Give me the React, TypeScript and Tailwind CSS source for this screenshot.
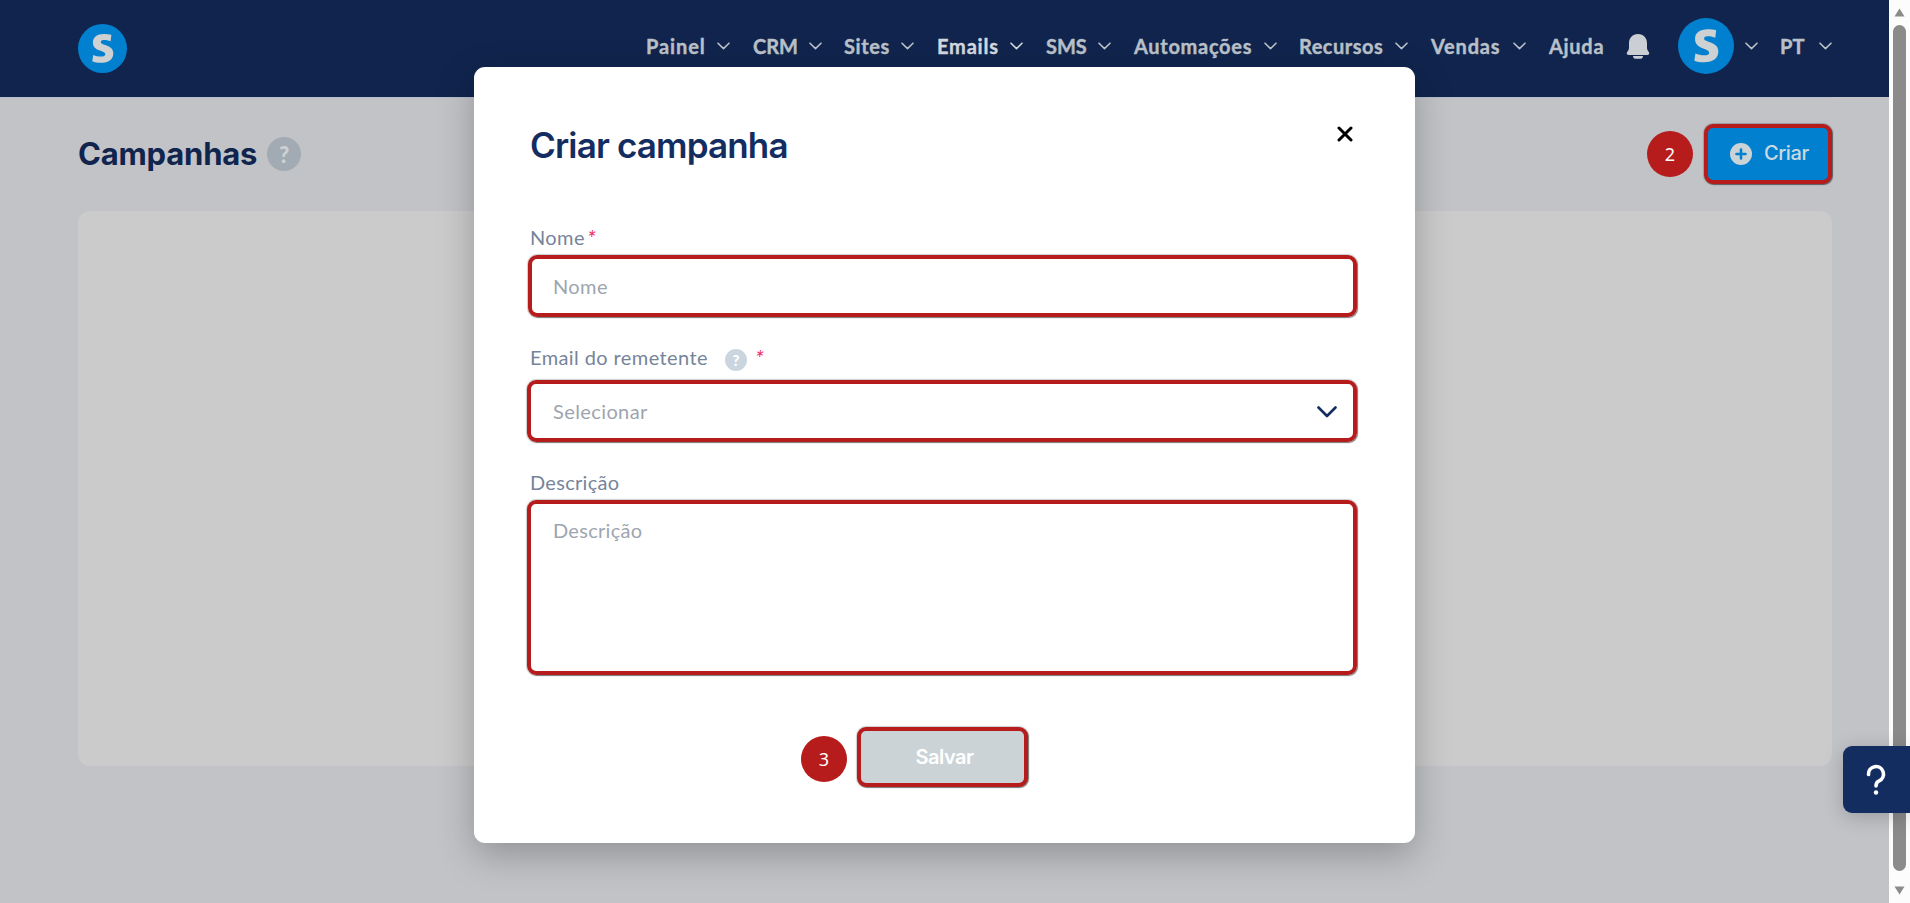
import React from "react";

const navItems = [
    { label: "Painel", text: "w-[71px] tracking-[0.9px]", box: "w-[107px]" },
    { label: "CRM", text: "w-[56px]", box: "w-[91px]" },
    { label: "Sites", text: "w-[57px] tracking-[0.6px]", box: "w-[93px]" },
    { label: "Emails", text: "w-[73px] tracking-[0.8px]", box: "w-[109px]", active: true },
    { label: "SMS", text: "w-[52px]", box: "w-[88px]" },
    { label: "Automações", text: "w-[130px] tracking-[0.7px]", box: "w-[165px]" },
    { label: "Recursos", text: "w-[96px] tracking-[0.5px]", box: "w-[132px]" },
    { label: "Vendas", text: "w-[82px] tracking-[0.8px]", box: "w-[118px]" },
];

const Chevron = () => (
    <svg width="13" height="8" viewBox="0 0 13 8" fill="none" className="mb-[1px] shrink-0">
        <path
            d="M1 1.2 6.5 6.6 12 1.2"
            stroke="currentColor"
            strokeWidth="1.6"
            strokeLinecap="round"
            strokeLinejoin="round"
        />
    </svg>
);

const Logo = ({ className }: { className: string }) => (
    <svg viewBox="0 0 49 49" className={className}>
        <circle cx="24.5" cy="24.5" r="24.5" fill="#0080cf" />
        <path
            d="M33.4 10.8C31 10.1 28.5 9.9 26 9.9C19 9.9 14.9 13 14.9 18.4C14.9 23 17.8 25 22 26.6C25.6 27.9 27.3 28.600 27.3 30.3C27.3 32 25.7 32.600 23 32.600C20.3 32.600 17.7 32 15.2 31L14.3 37.3C16.8 38.3 19.5 38.8 22.600 38.8C30.8 38.8 35.3 35.4 35.3 29.2C35.3 25 32.5 22.8 28 21.2C24.3 19.8 22.8 19.3 22.8 17.9C22.8 16.5 24.2 16 26.600 16C28.8 16 30.8 16.600 32.600 17.3Z"
            fill="#cdd1d2"
        />
    </svg>
);

const Badge = ({ children }: { children: React.ReactNode }) => (
    <div className="flex h-[46px] w-[46px] shrink-0 items-center justify-center rounded-full bg-[#b71c1c] pt-[1px] font-['Noto_Sans',sans-serif] text-[18px] text-white">
        {children}
    </div>
);

const Header = () => (
    <header className="flex h-[97px] w-[1889px] bg-[#10244d] pl-[78px] font-['Lato',sans-serif] text-[20px] font-bold text-[#b9c0c8]">
        <Logo className="mt-[24px] h-[49px] w-[49px]" />
        <nav className="ml-[519px] flex h-[92px] items-center whitespace-nowrap">
            {navItems.map((item) => (
                <div
                    key={item.label}
                    className={`${item.box} ${item.active ? "text-[#d3d8de]" : ""} flex shrink-0 items-center`}
                >
                    <span className={`${item.text} mb-[1px] shrink-0 [-webkit-text-stroke:0.4px]`}>{item.label}</span>
                    <Chevron />
                </div>
            ))}
            <span className="mb-[1px] w-[77px] shrink-0 tracking-[0.7px] [-webkit-text-stroke:0.4px]">Ajuda</span>
            <svg width="24" height="25" viewBox="0 0 24 25" fill="#cbcfd3" className="shrink-0">
                <path d="M12 0C6.500 0 3 4 3 9v4.500c0 2-.8 3.300-1.800 4.600C.3 19.300.6 21 2.500 21h19c1.900 0 2.200-1.700 1.300-2.900-1-1.300-1.800-2.600-1.800-4.600V9c0-5-3.500-9-9-9z" />
                <path d="M7 22h10c0 2-1.500 2.800-3 2.800h-4c-1.500 0-3-.8-3-2.800z" />
            </svg>
            <Logo className="mr-[11px] ml-[28px] h-[56px] w-[56px] shrink-0" />
            <Chevron />
            <span className="mb-[1px] ml-[22px] w-[39px] shrink-0 [-webkit-text-stroke:0.4px]">PT</span>
            <Chevron />
        </nav>
    </header>
);

const redBox = "rounded-[9px] border-4 border-[#b71c1c] shadow-[0_0_1px_1px_rgba(0,0,0,0.2),1px_1px_1px_rgba(0,0,0,0.4)]";

const Modal = () => (
    <div className="absolute top-[67px] left-[474px] h-[776px] w-[941px] rounded-[11px] bg-white pl-[53px] font-['Lato',sans-serif] shadow-[0_12px_36px_rgba(0,0,0,0.25)]">
        <div className="flex h-[146px] justify-between pt-[54px] pr-[62px] pl-[3px]">
            <h2 className="font-['Inter',sans-serif] text-[35px] leading-[48px] font-semibold tracking-[-0.85px] text-[#142d61]">
                Criar campanha
            </h2>
            <svg width="16" height="16" viewBox="0 0 16 16" className="mt-[5px]">
                <path d="M2 2 14 14M14 2 2 14" stroke="#000" strokeWidth="3" strokeLinecap="round" />
            </svg>
        </div>
        <div className="flex h-[42px] items-center pt-[6px] pl-[3px] text-[20px] tracking-[0.4px] text-[#76849a]">
            Nome<span className="ml-[2px] text-[22px] text-[#f0245c] italic">*</span>
        </div>
        <div className={`${redBox} ml-[1px] flex h-[62px] w-[829px] items-center pl-[21px] text-[20px] tracking-[0.4px] text-[#9da5af]`}>
            Nome
        </div>
        <div className="flex h-[63px] items-center pt-[20px] pl-[3px] text-[20px] tracking-[0.4px] text-[#76849a]">
            <span className="mb-[3px]">Email do remetente</span>
            <span className="mt-[3px] ml-[17px] flex h-[22px] w-[22px] items-center justify-center rounded-full bg-[#cbd5df] text-[15px] font-black tracking-normal text-white">
                ?
            </span>
            <span className="mb-[2px] ml-[8px] text-[22px] text-[#f0245c] italic">*</span>
        </div>
        <div className={`${redBox} flex h-[62px] w-[830px] items-center justify-between pr-[16px] pl-[22px] text-[20px] tracking-[0.4px] text-[#9da5af]`}>
            Selecionar
            <svg width="20" height="12" viewBox="0 0 20 12" fill="none" className="mt-[2px]">
                <path
                    d="M1.500 1.500 10 10 18.500 1.500"
                    stroke="#142d61"
                    strokeWidth="2.600"
                    strokeLinecap="round"
                    strokeLinejoin="round"
                />
            </svg>
        </div>
        <div className="flex h-[58px] items-center pt-[22px] pl-[3px] text-[20px] tracking-[0.3px] text-[#76849a]">
            Descrição
        </div>
        <div className={`${redBox} h-[175px] w-[830px] pt-[11px] pl-[22px] text-[20px] tracking-[0.3px] text-[#9da5af]`}>
            Descrição
        </div>
        <div className="mt-[52px] ml-[274px] flex gap-[10px]">
            <div className="mt-[9px]">
                <Badge>3</Badge>
            </div>
            <button
                className={`${redBox} flex h-[60px] w-[171px] items-center justify-center bg-[#cbd3d7] pl-[4px] font-['Inter',sans-serif] text-[20px] font-semibold tracking-[-0.5px] text-white`}
            >
                Salvar
            </button>
        </div>
    </div>
);

const Scrollbar = () => (
    <div className="absolute top-0 right-0 flex h-[903px] w-[21px] flex-col items-center bg-[#fcfcfc]">
        <svg width="11" height="9" viewBox="0 0 11 9" fill="#8b8b8b" className="mt-[8px]">
            <path d="M5.500.5 10.500 8.500H.5z" />
        </svg>
        <div className="mt-[8px] h-[846px] w-[13px] rounded-full bg-[#8b8b8b]" />
        <svg width="11" height="9" viewBox="0 0 11 9" fill="#8b8b8b" className="mt-[15px]">
            <path d="M5.500 8.500 10.500.5H.5z" />
        </svg>
    </div>
);

const App = () => {
    return (
        <div className="relative h-[903px] w-[1910px] overflow-hidden bg-[#c1c3c7]">
            <Header />
            <div className="flex h-[114px] w-[1832px] justify-between border-t border-[#b4bdcc] pl-[78px]">
                <div className="flex h-[113px] items-center">
                    <h1 className="w-[189px] font-['Inter',sans-serif] text-[31px] font-bold tracking-[-0.2px] text-[#10244d]">
                        Campanhas
                    </h1>
                    <span className="mb-[1px] flex h-[34px] w-[34px] items-center justify-center rounded-full bg-[#a2abb3] font-['Lato',sans-serif] text-[22px] font-black text-[#cdd1d3]">
                        ?
                    </span>
                </div>
                <div className="flex gap-[11px] pt-[26px]">
                    <div className="mt-[7px]">
                        <Badge>2</Badge>
                    </div>
                    <button
                        className={`${redBox} flex h-[60px] w-[128px] items-center bg-[#0080cf] pl-[22px] font-['Inter',sans-serif] text-[20px] font-medium tracking-[-0.4px] text-[#cbd9e0]`}
                    >
                        <svg width="22" height="22" viewBox="0 0 22 22" className="mr-[12px] shrink-0">
                            <circle cx="11" cy="11" r="11" fill="#cbd3d6" />
                            <path d="M11 6.500v9M6.500 11h9" stroke="#0080cf" strokeWidth="2.600" strokeLinecap="round" />
                        </svg>
                        <span className="mb-[3px]">Criar</span>
                    </button>
                </div>
            </div>
            <main className="ml-[78px] h-[555px] w-[1754px] rounded-[12px] bg-[#cbcbcb]" />
            <Modal />
            <Scrollbar />
            <div className="absolute top-[746px] right-0 flex h-[67px] w-[67px] items-center justify-center rounded-l-[9px] bg-[#142d61] shadow-[0_4px_20px_rgba(0,0,0,0.2)]">
                <svg width="20" height="32" viewBox="0 0 20 32" fill="none" className="mr-[2px]">
                    <path
                        d="M2.500 10.500A7.500 7.500 0 1 1 13.200 16.800C10.800 17.800 10 19 10 22"
                        stroke="#fff"
                        strokeWidth="3.600"
                        strokeLinecap="round"
                    />
                    <circle cx="10" cy="28.500" r="2.200" fill="#fff" />
                </svg>
            </div>
        </div>
    );
};

export default App;
